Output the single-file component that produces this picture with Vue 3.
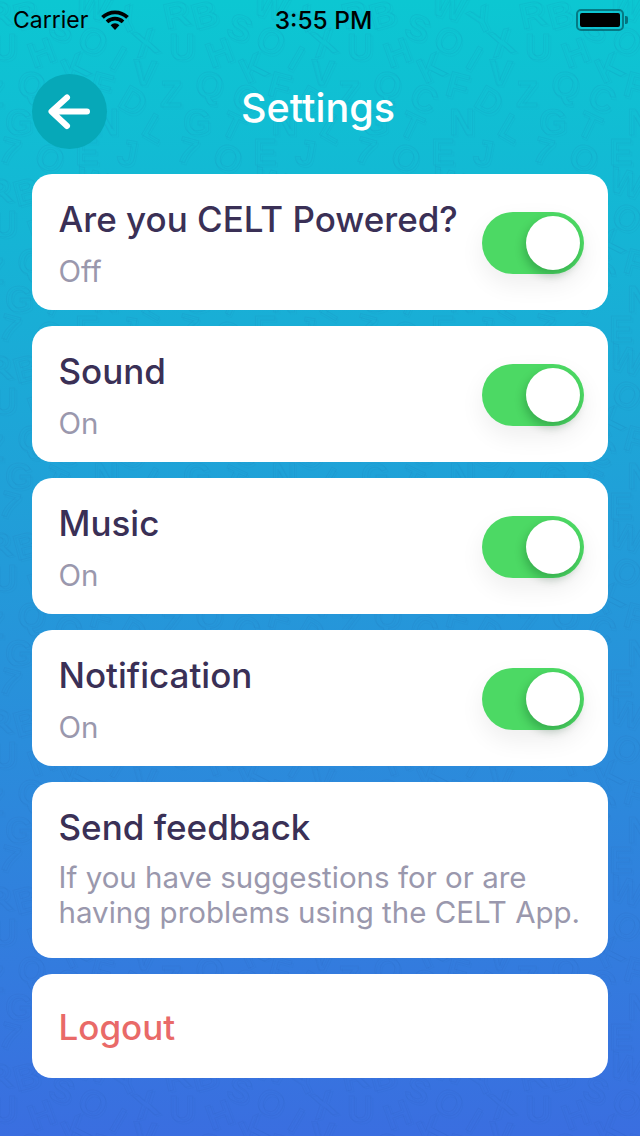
<script setup>
const rows = [
  { title: 'Are you CELT Powered?', sub: 'Off' },
  { title: 'Sound', sub: 'On' },
  { title: 'Music', sub: 'On' },
  { title: 'Notification', sub: 'On' }
]
const W = 178, H = 177
const base = [
  ['B',27,17,-15],['S',61,30,20],['W',92,8,15],['Y',126,22,-25],['R',177,17,-12],
  ['O',92,43,25],['X',146,45,-15],['U',4,50,0],['H',42,55,-20],['I',117,60,30],
  ['K',76,70,-25],['V',144,75,5],['F',101,88,15],['Q',31,87,10],['Z',171,97,0],
  ['C',67,100,25],['D',132,103,30],['T',54,128,25],['N',106,125,0],['L',154,130,30],
  ['G',19,125,0],['7',9,153,15],['E',87,155,0],['J',127,155,10],['O',49,160,25]
]
const letters = []
for (const [c, x, y, r] of base) {
  for (const dx of [-W, 0, W]) {
    for (const dy of [-H, 0, H]) {
      const px = x + dx, py = y + dy
      if (px > -25 && px < W + 25 && py > -25 && py < H + 25) {
        letters.push({ c, x: px, y: py, t: `translate(${px} ${py}) rotate(${r})` })
      }
    }
  }
}
</script>

<template>
  <div class="page">
    <svg class="pattern" width="640" height="1136" aria-hidden="true">
      <defs>
        <pattern id="abc" :width="W" :height="H" patternUnits="userSpaceOnUse">
          <g v-for="(l, i) in letters" :key="i" :transform="l.t">
            <text class="back" x="2" y="12" text-anchor="middle">{{ l.c }}</text>
            <text class="front" x="0" y="10" text-anchor="middle">{{ l.c }}</text>
          </g>
        </pattern>
      </defs>
      <rect width="640" height="1136" fill="url(#abc)" />
    </svg>

    <div class="content">
      <div class="status">
        <div class="status-left">
          <span>Carrier</span>
          <svg class="wifi" width="28" height="20" viewBox="0 0 28 20">
            <path d="M1.5 7.4a18 18 0 0 1 25 0" />
            <path d="M6 11.8a11.6 11.6 0 0 1 16 0" />
            <path class="dot" d="M9.6 15.2a6.2 6.2 0 0 1 8.8 0L14 20z" />
          </svg>
        </div>
        <span class="time">3:55 PM</span>
        <div class="battery">
          <div class="battery-body"><div class="battery-fill"></div></div>
          <div class="battery-nub"></div>
        </div>
      </div>

      <header class="header">
        <button class="back-btn" type="button" aria-label="Back">
          <svg width="75" height="75" viewBox="0 0 75 75">
            <path d="M55 37.5H20M35 23.5L19.5 37.5L35 52" />
          </svg>
        </button>
        <h1 class="heading">Settings</h1>
      </header>

      <main class="cards">
        <section v-for="r in rows" :key="r.title" class="card row">
          <div>
            <div class="title">{{ r.title }}</div>
            <div class="sub">{{ r.sub }}</div>
          </div>
          <div class="toggle"><div class="knob"></div></div>
        </section>
        <section class="card feedback">
          <div class="title">Send feedback</div>
          <div class="sub">If you have suggestions for or are<br>having problems using the CELT App.</div>
        </section>
        <section class="card logout">
          <div class="title danger">Logout</div>
        </section>
      </main>
    </div>
  </div>
</template>

<style>
html, body { margin: 0; padding: 0; }
</style>

<style scoped>
.page {
  position: relative;
  width: 640px;
  height: 1136px;
  overflow: hidden;
  background: linear-gradient(180deg, #0cc7d2 0%, #3a6ee0 100%);
  font-family: Inter, "Liberation Sans", sans-serif;
}
.pattern { position: absolute; inset: 0; }
.back, .front {
  font-family: "Liberation Sans", sans-serif;
  font-weight: 700;
  font-size: 36px;
  fill: none;
}
.back { stroke: rgba(10, 60, 130, 0.03); stroke-width: 1.2px; }
.front { stroke: rgba(10, 60, 130, 0.055); stroke-width: 1.2px; }
.content { position: relative; }

.status {
  height: 40px;
  display: grid;
  grid-template-columns: 1fr auto 1fr;
  align-items: center;
  padding: 0 12px 0 13px;
  color: #000;
  font-size: 23px;
}
.status-left { display: flex; align-items: center; gap: 13px; }
.wifi { display: block; fill: none; stroke: #000; stroke-width: 3.8px; }
.wifi .dot { fill: #000; stroke: none; }
.time { font-weight: 500; font-size: 24.5px; padding-left: 6px; }
.battery { justify-self: end; display: flex; align-items: center; }
.battery-body {
  width: 48px;
  height: 22px;
  box-sizing: border-box;
  border: 2px solid rgba(0, 60, 70, 0.55);
  border-radius: 5px;
  padding: 2px;
}
.battery-fill { height: 100%; background: #000; border-radius: 2px; }
.battery-nub {
  width: 3px;
  height: 8px;
  margin-left: 1px;
  background: rgba(0, 60, 70, 0.6);
  border-radius: 0 2px 2px 0;
}

.header {
  display: grid;
  grid-template-columns: 75px 1fr 75px;
  align-items: center;
  padding: 34px 32px 25px;
}
.back-btn {
  width: 75px;
  height: 75px;
  padding: 0;
  border: 0;
  border-radius: 50%;
  background: #06a8b8;
}
.back-btn svg {
  display: block;
  fill: none;
  stroke: #fff;
  stroke-width: 6px;
  stroke-linecap: round;
  stroke-linejoin: round;
}
.heading {
  margin: 0;
  padding: 0 4px 7px 0;
  text-align: center;
  color: #fff;
  font-size: 39.5px;
  line-height: 44px;
  font-weight: 500;
}

.cards {
  display: flex;
  flex-direction: column;
  gap: 16px;
  padding: 0 32px;
}
.card {
  box-sizing: border-box;
  background: #fff;
  border-radius: 20px;
  padding: 23px 24px 21px 26.5px;
}
.row {
  display: flex;
  justify-content: space-between;
  align-items: center;
  height: 136px;
}
.title {
  color: #3a3056;
  font-size: 35px;
  line-height: 44px;
  font-weight: 500;
}
.sub {
  margin-top: 12px;
  color: #9a98ad;
  font-size: 29.5px;
  line-height: 36px;
}
.row .title, .row .sub { white-space: nowrap; }
.row > div:first-child { margin-top: -1px; }
.feedback { padding-bottom: 28px; }
.feedback .sub { margin-top: 11px; line-height: 35px; white-space: nowrap; }
.logout { padding: 31px 24px 29px 26.5px; }
.danger { color: #e96a68; }

.toggle {
  position: relative;
  flex: none;
  width: 102px;
  height: 62px;
  margin-top: -1px;
  border-radius: 31px;
  background: #4cd964;
  box-shadow: 0 10px 24px rgba(0, 0, 0, 0.07);
}
.knob {
  position: absolute;
  top: 4px;
  right: 4px;
  width: 54px;
  height: 54px;
  border-radius: 50%;
  background: #fff;
  box-shadow: -2px 5px 10px rgba(0, 60, 20, 0.28);
}
</style>
